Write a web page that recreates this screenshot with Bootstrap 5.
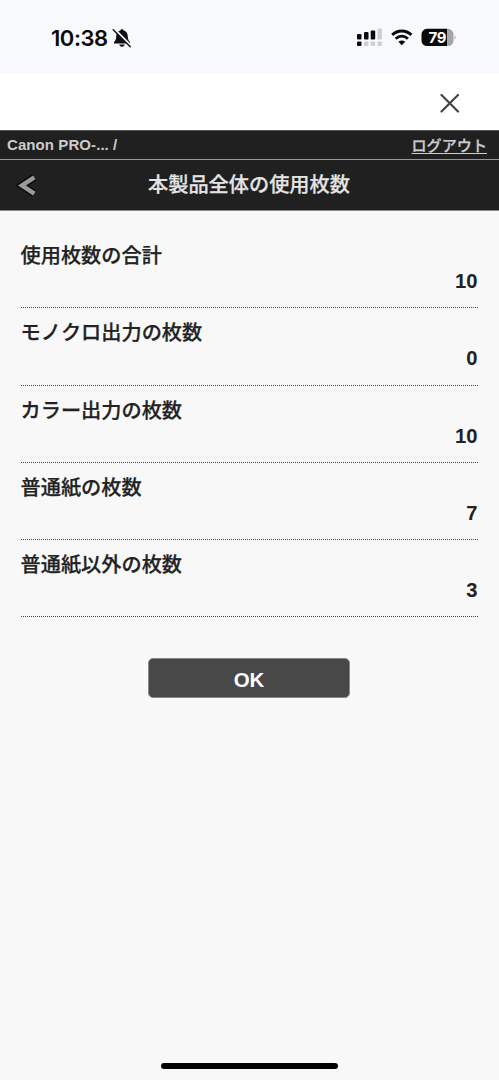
<!DOCTYPE html>
<html lang="ja">
<head>
<meta charset="utf-8">
<meta name="viewport" content="width=device-width, initial-scale=1">
<title>本製品全体の使用枚数</title>
<link href="https://cdn.jsdelivr.net/npm/bootstrap@5.3.0/dist/css/bootstrap.min.css" rel="stylesheet">
<style>
body{background:#f8f8f8;color:#222;font-family:"Liberation Sans","Noto Sans CJK JP",sans-serif;height:1080px;overflow:hidden}
.status-bar{height:74px;background:#f7f9fc;padding:1px 43px 0 51px}
.clock{font:600 22px/26px Inter,sans-serif;color:#0a0a0a;letter-spacing:-.45px}
.battery-text{font:700 15px Inter,sans-serif;letter-spacing:-.3px}
.sheet-bar{height:56px;background:#fff;padding:1px 39px 0 0}
.device-bar{height:30px;background:#202020;color:#ccc;border-top:1px solid #555;border-bottom:1px solid #999;padding:0 12px 0 7px;font-size:15px;letter-spacing:.08px;line-height:27px}
.logout{color:#ccc;font-size:15.1px;letter-spacing:0;line-height:26px;text-underline-offset:2px}
.title-bar{height:51px;background:#202020;border-bottom:1px solid #888;display:grid;grid-template-columns:56px 1fr 56px}
.title-bar h1{font-size:20.2px;color:#e4e4e4;line-height:48px;margin-left:-1px!important}
.jp{font-family:"Noto Sans CJK JP",sans-serif;font-weight:500;-webkit-text-stroke:.25px currentColor}
.counts{padding:20px 21.5px 0 20.5px}
.count-row{height:77.3px;border-bottom:1px dotted #444;font-size:20.2px;line-height:26px;padding-top:11px}
.ok-btn{width:202px;height:40px;margin-top:41px;background:#484848;border:1px solid #888;border-radius:5px;color:#fff;font-size:20.5px;line-height:1;padding:8px 0 4px}
.ok-btn:hover{background:#555;color:#fff}
.home-bar{width:177px;height:6px;background:#000;margin-bottom:11px}
</style>
</head>
<body class="d-flex flex-column">
<div class="status-bar d-flex align-items-center justify-content-between">
  <div class="d-flex align-items-center">
    <span class="clock">10:38</span>
    <svg class="ms-1" width="20" height="20" viewBox="0 0 20 20" aria-hidden="true">
      <path d="M10 1.200c-1 0-1.600.6-1.700 1.400C5.600 3.300 4.300 5.500 4.200 8.400 4.100 11.300 3.500 12.300 2 14v1.500h16V14c-1.500-1.700-2.100-2.700-2.200-5.600-.1-2.900-1.400-5.100-4.100-5.800C11.600 1.800 11 1.200 10 1.200zM7.300 16.600h5.400c-.3 1.400-1.300 2.200-2.700 2.200s-2.400-.8-2.700-2.200z" fill="#111"/>
      <path d="M2.300 1.200l17 17" stroke="#f7f9fc" stroke-width="2.400"/>
      <path d="M1.200 1.800l17 17" stroke="#111" stroke-width="1.500" stroke-linecap="round"/>
    </svg>
  </div>
  <svg width="99" height="20" viewBox="357 28 99 20" role="img">
    <g fill="#0a0a0a"><rect x="357" y="34" width="4.500" height="5.500" rx="1"/><rect x="364" y="32" width="4.500" height="7.500" rx="1"/><rect x="370.700" y="30.500" width="4.500" height="9" rx="1"/><rect x="357" y="41.500" width="4.500" height="4.500" rx="1"/></g>
    <g fill="#cfd0d2"><rect x="377.500" y="28.500" width="4.500" height="11" rx="1"/><rect x="364" y="41.500" width="4.500" height="4.500" rx="1"/><rect x="370.700" y="41.500" width="4.500" height="4.500" rx="1"/><rect x="377.500" y="41.500" width="4.500" height="4.500" rx="1"/></g>
    <g fill="none" stroke="#0a0a0a" stroke-width="2.900"><path d="M392.200 34.900c5.400-5.300 13.800-5.300 19.200 0M395.700 38.700c3.500-3.400 8.700-3.400 12.200 0"/></g>
    <path d="M398.400 41.700c2-1.700 4.800-1.700 6.800 0l-3.400 3.500z" fill="#0a0a0a"/>
    <path d="M446.500 28.800h1.500a5.500 5.500 0 0 1 5.500 5.500v6.200a5.500 5.500 0 0 1-5.500 5.500h-1.500z" fill="#a5a5a7"/>
    <path d="M427 28.800h20V46h-20a5.500 5.500 0 0 1-5.500-5.500v-6.200a5.500 5.500 0 0 1 5.500-5.500z" fill="#0a0a0a"/>
    <path d="M454.500 35.500c1.500.6 1.500 3.400 0 4z" fill="#a5a5a7"/>
    <text class="battery-text" x="437.300" y="42.800" text-anchor="middle" fill="#fff">79</text>
  </svg>
</div>
<div class="sheet-bar d-flex align-items-center justify-content-end">
  <svg width="20" height="20" viewBox="0 0 20 20" role="button" aria-label="閉じる"><path d="M1.500 2l16.500 16.500M18 2L1.500 18.500" stroke="#444" stroke-width="2.200" stroke-linecap="round"/></svg>
</div>
<div class="device-bar d-flex justify-content-between"><strong>Canon PRO-... /</strong><a href="#" class="logout jp">ログアウト</a></div>
<header class="title-bar">
  <svg width="56" height="50" viewBox="0 0 56 50" aria-hidden="true"><path d="M34.300 17.300L22 25.500 34.300 33.700" fill="none" stroke="#0b0b0b" stroke-width="7.500"/><path d="M34.300 17.300L22 25.500 34.300 33.700" fill="none" stroke="#999" stroke-width="4.500"/></svg>
  <h1 class="jp text-center m-0">本製品全体の使用枚数</h1>
</header>
<main class="counts flex-grow-1">
  <div class="count-row"><div class="jp">使用枚数の合計</div><div class="text-end fw-bold">10</div></div>
  <div class="count-row"><div class="jp">モノクロ出力の枚数</div><div class="text-end fw-bold">0</div></div>
  <div class="count-row"><div class="jp">カラー出力の枚数</div><div class="text-end fw-bold">10</div></div>
  <div class="count-row"><div class="jp">普通紙の枚数</div><div class="text-end fw-bold">7</div></div>
  <div class="count-row"><div class="jp">普通紙以外の枚数</div><div class="text-end fw-bold">3</div></div>
  <button type="button" class="btn ok-btn d-block mx-auto fw-bold">OK</button>
</main>
<div class="home-bar rounded-pill mx-auto"></div>
<script src="https://cdn.jsdelivr.net/npm/bootstrap@5.3.0/dist/js/bootstrap.bundle.min.js"></script>
</body>
</html>
